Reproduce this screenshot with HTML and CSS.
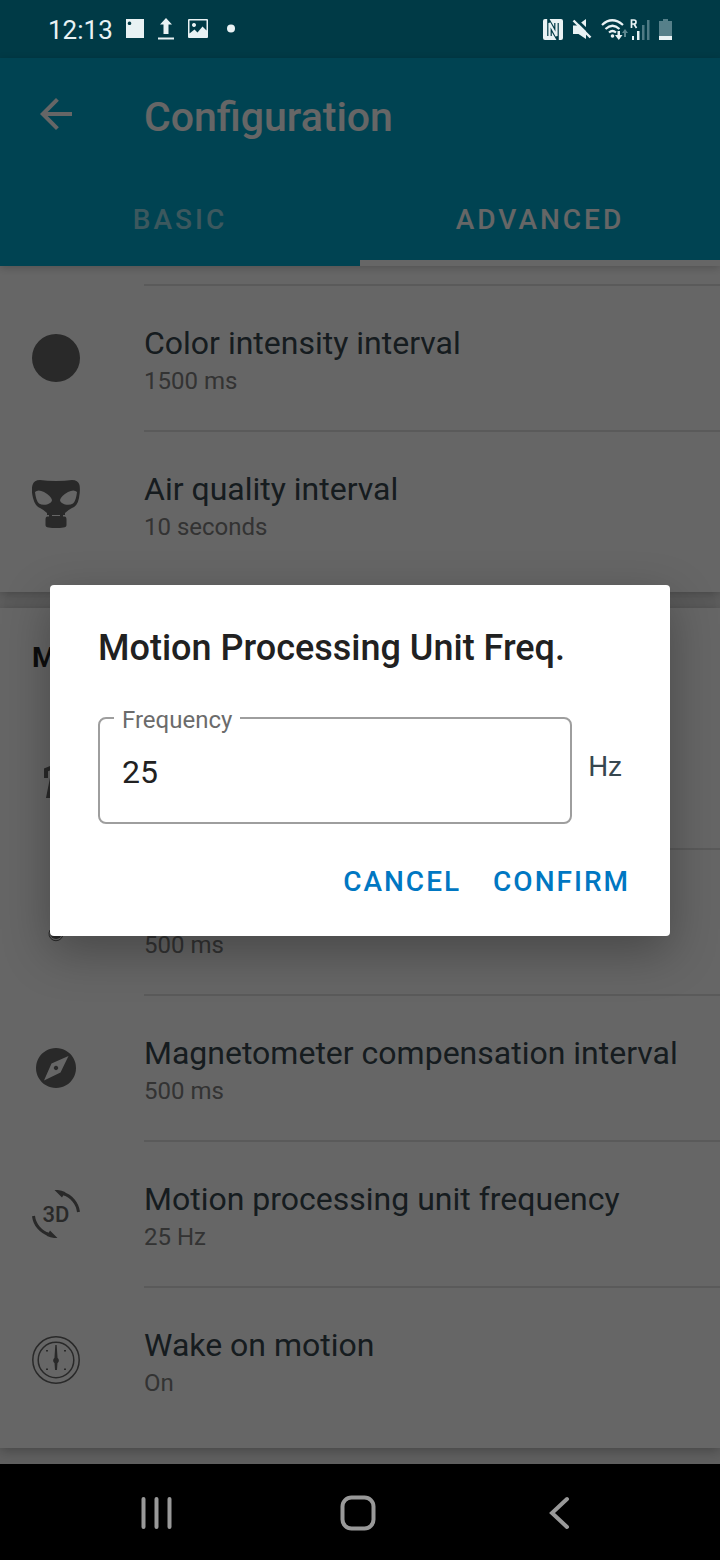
FILE: index.html
```html
<!DOCTYPE html>
<html lang="en">
<head>
<meta charset="utf-8">
<meta name="viewport" content="width=device-width, initial-scale=1">
<title>Configuration</title>
<link rel="stylesheet" href="styles.css">
</head>
<body>
<div class="status">
  <time class="clock">12:13</time>
  <div class="notices">
    <svg width="20" height="20" viewBox="0 0 20 20"><path fill="currentColor" fill-rule="evenodd" d="M1 0h18v19H1zM4.500 2.500a1.800 1.800 0 1 0 .01 0z"/></svg>
    <svg width="18" height="22" viewBox="0 0 18 22"><path fill="currentColor" d="M9 0l6 6.500h-3.500V16h-5V6.500H3zM1 19.500h16v2H1z"/></svg>
    <svg width="22" height="20" viewBox="0 0 22 20"><path fill="currentColor" fill-rule="evenodd" d="M2 0h18q1 0 1 1v17q0 1-1 1H2q-1 0-1-1V1q0-1 1-1zM2.500 1.500v13l5-4 3 3 5-6 4 4v-10zM7 4a2 2 0 1 1-.01 0z"/></svg>
    <svg class="more" width="10" height="10" viewBox="0 0 10 10"><circle cx="4" cy="4.500" r="4" fill="currentColor"/></svg>
  </div>
  <div class="signals">
    <svg width="20" height="21" viewBox="0 0 20 21"><rect width="20" height="21" rx="2" fill="currentColor"/><path d="M6.500 17V4.500l7 12V4" fill="none" stroke="#003a46" stroke-width="4.600"/><path d="M6.500 17.500V4l7 13V3.500" fill="none" stroke="currentColor" stroke-width="2.200"/></svg>
    <svg width="20" height="21" viewBox="0 0 20 21"><path fill="currentColor" d="M1 6.500h4L14 0v20l-7.500-5H1z"/><path d="M3.500 0l16 15.500" stroke="#003a46" stroke-width="3"/><path d="M1.500 1.500l17 17" stroke="currentColor" stroke-width="2.400"/></svg>
    <svg width="27" height="21" viewBox="0 0 27 21"><path d="M1 6q10-9.500 21 0M4.500 10q7-6.500 14 0M8 13.500q3.500-3 7 0" fill="none" stroke="currentColor" stroke-width="2.200"/><circle cx="11.500" cy="17" r="1.800" fill="currentColor"/><path d="M16.500 12h2.500v4h2.500l-3.700 5-3.800-5h2.500z" fill="currentColor"/><path d="M23 18v-4h-2l3-4 3 4h-2v4z" fill="#5d8790"/></svg>
    <svg width="20" height="21" viewBox="0 0 20 21"><path d="M1.500 9V1H4q2 0 2 2T4 5H1.500M4 5l2.500 4" fill="none" stroke="currentColor" stroke-width="1.700"/><path fill="currentColor" d="M2 17h2v4H2zM7 12h2.500v9H7z"/><path fill="#4f7a84" d="M12 6h2.500v15H12zM17 1h2.500v20H17z"/></svg>
    <svg width="13" height="21" viewBox="0 0 13 21"><path fill="#56808a" d="M4 0h5v2h4v16H0V2h4z"/><path fill="currentColor" d="M0 17h13v4H0z"/></svg>
  </div>
</div>

<div class="app">
  <header class="appbar">
    <div class="toolbar">
      <button class="back" type="button" aria-label="Back"><svg width="32" height="32" viewBox="4 4 16 16"><path fill="currentColor" d="M20 11H7.830l5.590-5.590L12 4l-8 8 8 8 1.410-1.410L7.830 13H20v-2z"/></svg></button>
      <h1 class="title">Configuration</h1>
    </div>
    <nav class="tabs">
      <button class="tab" type="button">BASIC</button>
      <button class="tab tab-active" type="button">ADVANCED</button>
    </nav>
  </header>

  <main class="page">
    <section class="card">
      <div class="lead"></div>
      <div class="row">
        <svg class="icon" viewBox="0 0 48 48"><circle cx="24" cy="24" r="24" fill="currentColor"/></svg>
        <div class="text"><div class="name">Color intensity interval</div><div class="value">1500 ms</div></div>
      </div>
      <div class="row">
        <svg class="icon" viewBox="0 0 48 48"><path fill="currentColor" fill-rule="evenodd" d="M8 0q7 1 16 1t16-1q6 0 7.500 5 1 5-.5 13-1.500 8-7 10-4 2-7 5v2h-2v1.500h1.500q2 0 2 3V45q0 2-3 2.500-7.500 1-15 0-3-.5-3-2.500v-5.500q0-3 2-3H17V35h-2v-2q-3-3-7-5-5-2-7-10Q-1 10 .5 5 2 0 8 0zM3 12q1 9 4 11.500 3 2 8 1 5-2 5-4.500-1-4-8-8-6-3-9-0zM45 12q-3-3-9 0-7 4-8 8 0 2.500 5 4.500 5 1 8-1 3-2.500 4-11.500zM20 35v1h8v-1z"/></svg>
        <div class="text"><div class="name">Air quality interval</div><div class="value">10 seconds</div></div>
      </div>
    </section>

    <section class="card">
      <h2 class="heading">Motion</h2>
      <div class="row">
        <svg class="icon" viewBox="0 0 24 24"><path fill="currentColor" d="M13.500 5.500c1.100 0 2-.9 2-2s-.9-2-2-2-2 .9-2 2 .9 2 2 2zM9.800 8.900L7 23h2.100l1.800-8 2.100 2v6h2v-7.500l-2.100-2 .6-3C14.800 12 16.800 13 19 13v-2c-1.900 0-3.500-1-4.300-2.400l-1-1.600c-.4-.6-1-1-1.700-1-.3 0-.5.1-.8.1L6 8.300V13h2V9.600l1.800-.7"/></svg>
        <div class="text"><div class="name">Step counter interval</div><div class="value">500 ms</div></div>
      </div>
      <div class="row">
        <svg class="icon" viewBox="0 0 48 48"><path d="M20 30V6a4 4 0 0 1 8 0v24a7 7 0 1 1-8 0z" fill="none" stroke="currentColor"/><circle cx="24" cy="35" r="6" fill="currentColor"/></svg>
        <div class="text"><div class="name">Temperature compensation interval</div><div class="value">500 ms</div></div>
      </div>
      <div class="row">
        <svg class="icon" viewBox="0 0 48 48"><path fill="currentColor" fill-rule="evenodd" d="M24 4a20 20 0 1 0 .01 0zM36.500 12L28.500 28.500 12 36.500 19.500 19.500zM24 21.800a2.200 2.200 0 1 0 .01 0z"/></svg>
        <div class="text"><div class="name">Magnetometer compensation interval</div><div class="value">500 ms</div></div>
      </div>
      <div class="row">
        <svg class="icon" viewBox="0 0 48 48"><path fill="none" stroke="currentColor" stroke-width="3" d="M31 3.500A22 22 0 0 1 46.500 22M1.500 26A22 22 0 0 0 17 44.500"/><path fill="currentColor" d="M22.500 0q6-.4 10.500 2l2 4-3.500-1-1.500 2.500zM25.500 48q-6 .4-10.500-2l-2-4 3.500 1 1.500-2.500z"/><text class="glyph" x="24" y="32" text-anchor="middle" fill="currentColor">3D</text></svg>
        <div class="text"><div class="name">Motion processing unit frequency</div><div class="value">25 Hz</div></div>
      </div>
      <div class="row">
        <svg class="icon" viewBox="0 0 48 48"><g fill="none" stroke="currentColor" stroke-width="1.500"><circle cx="24" cy="24" r="23.200"/><circle cx="24" cy="24" r="17.800"/></g><circle cx="24" cy="24.500" r="2.800" fill="currentColor"/><path fill="currentColor" d="M23.300 9h1.400l1 15-.7 10h-2l-.7-10zM14 14h2v1.500h-2zM32 14h2v1.500h-2zM14 32.500h2V34h-2zM32 32.500h2V34h-2z"/></svg>
        <div class="text"><div class="name">Wake on motion</div><div class="value">On</div></div>
      </div>
    </section>
  </main>

  <div class="scrim">
    <form class="dialog" role="dialog" aria-labelledby="dialog-title">
      <h2 class="dialog-title" id="dialog-title">Motion Processing Unit Freq.</h2>
      <div class="entry">
        <div class="field">
          <label class="label" for="frequency">Frequency</label>
          <input class="input" id="frequency" type="text" inputmode="numeric" value="25">
        </div>
        <span class="unit">Hz</span>
      </div>
      <div class="actions">
        <button class="action" type="button">CANCEL</button>
        <button class="action" type="button">CONFIRM</button>
      </div>
    </form>
  </div>
</div>

<nav class="navbar">
  <button class="key" type="button" aria-label="Recent apps"><svg width="36" height="36" viewBox="0 0 36 36"><path d="M4.500 4v28M17.500 4v28M30.500 4v28" stroke="currentColor" stroke-width="4" stroke-linecap="round"/></svg></button>
  <button class="key" type="button" aria-label="Home"><svg width="36" height="36" viewBox="0 0 36 36"><rect x="2.500" y="2.500" width="31" height="31" rx="9" fill="none" stroke="currentColor" stroke-width="4"/></svg></button>
  <button class="key" type="button" aria-label="Back"><svg width="36" height="36" viewBox="0 0 36 36"><path d="M26 4L11 18l15 14" fill="none" stroke="currentColor" stroke-width="4" stroke-linecap="round"/></svg></button>
</nav>
</body>
</html>
```
FILE: styles.css
```css
* { box-sizing: border-box; }

body {
  margin: 0;
  min-height: 100vh;
  display: flex;
  flex-direction: column;
  background: #000;
  font-family: Roboto, "Liberation Sans", sans-serif;
}

h1, h2 { margin: 0; }

button {
  margin: 0;
  padding: 0;
  border: 0;
  background: none;
  color: inherit;
  font: inherit;
}

svg { display: block; flex: none; }

/* System status bar */
.status {
  display: flex;
  align-items: center;
  height: 58px;
  padding: 0 48px;
  background: #003a46;
  color: #e9f2f4;
}
.clock { font-size: 26px; line-height: 32px; padding-top: 2px; }
.notices { display: flex; align-items: center; gap: 12px; margin-left: 12px; }
.more { margin-left: 6px; }
.signals { display: flex; align-items: center; gap: 9px; margin-left: auto; }
.signals svg:nth-child(4) { margin-left: -7px; }

/* App */
.app {
  position: relative;
  flex: 1;
  display: flex;
  flex-direction: column;
}
.appbar {
  position: relative;
  z-index: 1;
  background: #00a9ce;
  color: #fff;
  box-shadow: 0 2px 8px rgba(0, 0, 0, .2);
}
.toolbar {
  display: flex;
  align-items: center;
  gap: 72px;
  height: 112px;
  padding: 0 40px;
}
.title { font-size: 41px; font-weight: 500; line-height: 48px; padding-top: 6px; }
.tabs { display: flex; }
.tab {
  flex: 1;
  height: 96px;
  border-bottom: 6px solid transparent;
  padding-top: 8px;
  font-size: 28px;
  font-weight: 500;
  letter-spacing: 3px;
  color: rgba(255, 255, 255, .6);
}
.tab-active { color: #fff; border-bottom-color: #fff; }

.page {
  flex: 1;
  display: flex;
  flex-direction: column;
  gap: 16px;
  padding-bottom: 16px;
  background: #eee;
}
.card {
  padding-bottom: 16px;
  background: #fff;
  box-shadow: 0 2px 12px rgba(0, 0, 0, .3);
}
.lead { height: 20px; margin-left: 144px; border-bottom: 2px solid #e2e2e2; }
.heading {
  padding: 32px 32px 28px;
  font-size: 28px;
  font-weight: 700;
  line-height: 36px;
  color: #212121;
}
.row {
  display: flex;
  align-items: stretch;
  gap: 64px;
  padding-left: 32px;
}
.icon { width: 48px; height: 48px; margin-top: 48px; color: #666; }
.glyph { font-size: 22px; font-weight: 500; }
.text {
  flex: 1;
  padding: 36px 0 32px;
  white-space: nowrap;
}
.row:not(:last-child) .text { border-bottom: 2px solid #e2e2e2; }
.name { font-size: 32px; line-height: 42px; color: #37474f; }
.value { font-size: 24px; line-height: 34px; color: #808080; }

/* Dialog */
.scrim {
  position: absolute;
  inset: 0;
  z-index: 2;
  display: flex;
  align-items: center;
  padding: 0 50px 2px;
  background: rgba(0, 0, 0, .6);
}
.dialog {
  flex: 1;
  padding: 39px 24px 22px 48px;
  border-radius: 4px;
  background: #fff;
  box-shadow: 0 16px 48px rgba(0, 0, 0, .3);
}
.dialog-title { font-size: 36px; font-weight: 500; line-height: 48px; color: #212121; }
.entry {
  display: flex;
  align-items: center;
  gap: 16px;
  margin: 45px 24px 26px 0;
}
.field { position: relative; flex: 1; }
.label {
  position: absolute;
  top: -13px;
  left: 16px;
  padding: 0 8px;
  background: #fff;
  font-size: 24px;
  line-height: 32px;
  color: #6b6b6b;
}
.input {
  display: block;
  width: 100%;
  height: 107px;
  padding: 4px 22px 0;
  border: 2px solid #9e9e9e;
  border-radius: 8px;
  background: none;
  font: inherit;
  font-size: 32px;
  color: #212121;
}
.unit { font-size: 28px; line-height: 36px; padding-bottom: 6px; color: #37474f; }
.actions { display: flex; justify-content: flex-end; }
.action {
  height: 64px;
  padding: 0 16px;
  font-size: 28px;
  font-weight: 500;
  letter-spacing: 2px;
  color: #0077c2;
}

/* System navigation bar */
.navbar {
  display: flex;
  align-items: center;
  height: 96px;
  padding: 2px 60px 0 56px;
  background: #000;
  color: #999;
}
.key { flex: 1; display: flex; justify-content: center; }
```
